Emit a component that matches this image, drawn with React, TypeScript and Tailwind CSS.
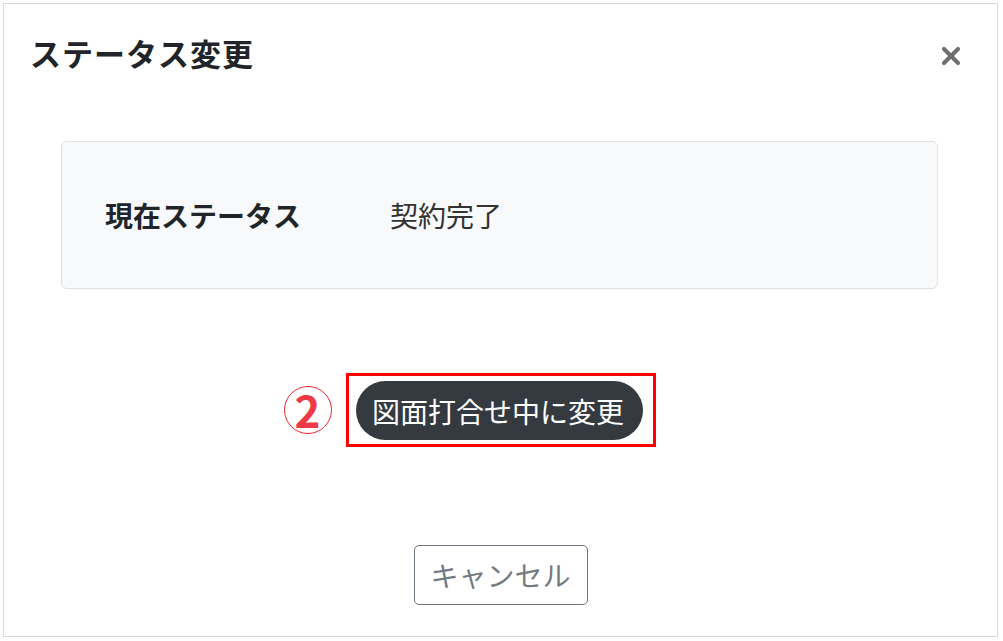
import { X } from 'lucide-react';

const font = { fontFamily: '"Noto Sans CJK JP", "Noto Sans", sans-serif' };

export default function App() {
  return (
    <div className="w-[1003px] h-[641px] bg-white pt-[3px] pl-[3px]" style={font}>
      <div className="w-[995px] h-[634px] border border-[#d9d9d9] bg-white">
        {/* header */}
        <div className="flex items-center justify-between mt-[29px] pl-[26px] pr-[32px] h-[40px]">
          <h1 className="text-[31px] leading-[40px] font-bold text-[#212529] tracking-[1px]">ステータス変更</h1>
          <X className="w-[28px] h-[28px] text-[#6f6f6f] mt-[6px]" strokeWidth={3.5} />
        </div>

        {/* current status */}
        <div className="ml-[57px] mr-[59px] mt-[68px] h-[148px] rounded-[6px] border border-[#dee2e6] bg-[#f8f9fa] flex items-center pl-[43px]">
          <span className="w-[285px] text-[28px] font-bold text-[#212529]">現在ステータス</span>
          <span className="text-[28px] text-[#333]">契約完了</span>
        </div>

        {/* action */}
        <div className="mt-[92px] flex justify-center pr-[3px]">
          <div className="relative">
            <button className="w-[287px] h-[59px] rounded-full bg-[#343a40] text-white text-[28px] flex items-center justify-center pr-[2px]">
              図面打合せ中に変更
            </button>
            <div className="absolute left-[-10px] right-[-13px] top-[-8px] bottom-[-7px] border-[3px] border-[#ff0000]" />
            <div className="absolute left-[-72px] top-[5px] w-[48px] h-[48px] rounded-full border border-[#ee2a32] flex items-center justify-center">
              <span className="text-[#ec3a46] text-[44px] font-bold leading-none -mt-[2px]">2</span>
            </div>
          </div>
        </div>

        {/* cancel */}
        <div className="mt-[105px] flex justify-center">
          <button className="w-[174px] h-[60px] rounded-[5px] border border-[#6c757d] text-[#737b82] text-[28px] flex items-center justify-center">
            キャンセル
          </button>
        </div>
      </div>
    </div>
  );
}
